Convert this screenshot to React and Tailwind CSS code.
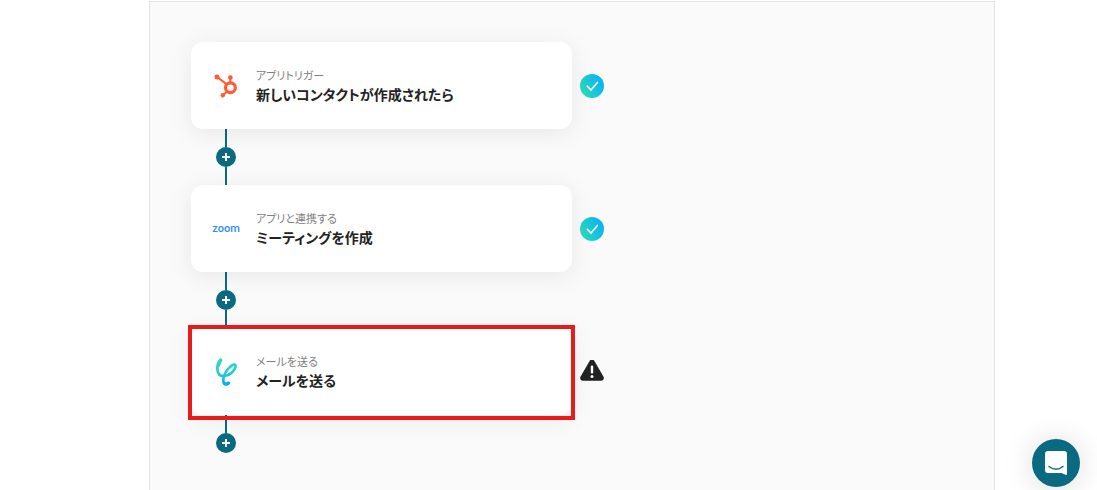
import React from "react";

const steps = [
  {
    id: "trigger",
    label: "アプリトリガー",
    title: "新しいコンタクトが作成されたら",
    logo: HubSpotLogo,
    status: "done",
  },
  {
    id: "zoom",
    label: "アプリと連携する",
    title: "ミーティングを作成",
    logo: ZoomLogo,
    status: "done",
  },
  {
    id: "mail",
    label: "メールを送る",
    title: "メールを送る",
    logo: MailLogo,
    status: "warning",
    selected: true,
  },
];

function HubSpotLogo() {
  return (
    <svg viewBox="0 0 24 24" className="size-6" fill="none" stroke="#ff5c35">
      <circle cx="16.4" cy="13.7" r="4.9" strokeWidth="3.2" />
      <path d="M3.2 3 L12.8 10.4" strokeWidth="2" />
      <path d="M16.4 3.6 V8.8" strokeWidth="2" />
      <path d="M12.8 17.6 L9.2 21.2" strokeWidth="2" />
      <g fill="#ff5c35" stroke="none">
        <circle cx="3" cy="3" r="2.5" />
        <circle cx="16.4" cy="3.6" r="2.3" />
        <circle cx="8.8" cy="21.3" r="2.2" />
      </g>
    </svg>
  );
}

function ZoomLogo() {
  return (
    <span className="[font-family:Roboto,sans-serif] text-[11px] leading-3 font-medium text-[#2d8cff]">
      zoom
    </span>
  );
}

function MailLogo() {
  return (
    <svg viewBox="0 0 24 30" className="h-[30px] w-6" fill="none">
      <defs>
        <linearGradient id="mail-logo" gradientUnits="userSpaceOnUse" x1="8" y1="2" x2="13" y2="28">
          <stop offset="0" stopColor="#2fdcb8" />
          <stop offset="0.6" stopColor="#1fcbd8" />
          <stop offset="1" stopColor="#06a8ff" />
        </linearGradient>
      </defs>
      <g stroke="url(#mail-logo)" strokeLinecap="round" strokeLinejoin="round">
        <path d="M6.6 3 C4 6 3.2 9.6 3.4 12.6 C3.8 17 6.6 19.2 10 19.2 C15.6 19 21 13.6 21.6 9.4 C21.8 7.4 19.4 7 17.4 8.8 C13.6 12 10 17.6 9.4 21.6 C9 24.4 9.2 25.8 10.6 26.6" strokeWidth="2.7" />
        <path d="M6.6 3.2 C5.4 4.8 4.8 6.4 4.4 8" strokeWidth="3.6" />
        <path d="M10.6 26.6 C11.8 27.4 13.4 27 14.4 26" strokeWidth="3.4" />
      </g>
    </svg>
  );
}

function DoneIcon() {
  return (
    <svg viewBox="0 0 24 24" className="size-6" fill="none" role="img" aria-label="完了">
      <defs>
        <linearGradient id="done" x1="0" y1="0.75" x2="1" y2="0.25">
          <stop offset="0" stopColor="#2fdcb8" />
          <stop offset="1" stopColor="#06b0f8" />
        </linearGradient>
      </defs>
      <circle cx="12" cy="12" r="12" fill="url(#done)" />
      <path d="M7.3 12.2 L11 16 L17.4 8.4" stroke="#fff" strokeWidth="1.6" strokeLinecap="round" />
    </svg>
  );
}

function WarningIcon() {
  return (
    <svg viewBox="0 0 24 24" className="size-6" role="img" aria-label="警告">
      <path
        d="M9.6 0.9 C10.7 -0.7 13.3 -0.7 14.4 0.9 L23.4 16.4 C24.6 18.5 23.3 20.8 21 20.8 H3 C0.7 20.8 -0.6 18.5 0.6 16.4 Z"
        fill="#222"
      />
      <path d="M12 6.6 V12.2" stroke="#fff" strokeWidth="2.4" strokeLinecap="round" />
      <circle cx="12" cy="16.4" r="1.5" fill="#fff" />
    </svg>
  );
}

function StepCard({ step }) {
  const Logo = step.logo;
  return (
    <div className="flex items-center gap-2">
      <div className="relative w-[381px] max-w-full">
        <button
          type="button"
          className="flex h-[87px] w-full items-center rounded-xl bg-white pl-5 text-left shadow-[0_4px_24px_rgba(0,0,0,0.08)]"
        >
          <span className="flex w-[30px] shrink-0 items-center justify-center">
            <Logo />
          </span>
          <span className="flex flex-col pl-[15px]">
            <span className="text-[11px] leading-4 text-[#808080]">{step.label}</span>
            <span className="text-[14px] leading-[22px] font-bold text-[#222]">{step.title}</span>
          </span>
        </button>
        {step.selected && (
          <span className="pointer-events-none absolute -inset-x-[3px] -top-[3px] -bottom-[5px] border-4 border-[#e81b1b]" />
        )}
      </div>
      {step.status === "done" ? <DoneIcon /> : <WarningIcon />}
    </div>
  );
}

function Connector({ last }) {
  return (
    <div className="flex w-[70px] flex-col items-center">
      <span className="h-[18px] w-0.5 bg-[#0a6a82]" />
      <button
        type="button"
        aria-label="ステップを追加"
        className="flex size-5 items-center justify-center rounded-full bg-[#0a6a82]"
      >
        <svg viewBox="0 0 8 8" className="size-2" stroke="#fff" strokeWidth="2">
          <path d="M4 0 V8 M0 4 H8" />
        </svg>
      </button>
      {!last && <span className="h-[18px] w-0.5 bg-[#0a6a82]" />}
    </div>
  );
}

function App() {
  return (
    <div className="flex h-screen overflow-hidden bg-white pt-px pr-[102px] pl-[149px] font-['Noto_Sans_CJK_JP',sans-serif] [font-feature-settings:'palt']">
      {/* Flow canvas */}
      <main className="flex-1 border-x border-t border-[#e3e3e3] bg-[#fafafa] px-[41px] pt-10">
        {steps.map((step, i) => (
          <React.Fragment key={step.id}>
            <StepCard step={step} />
            <Connector last={i === steps.length - 1} />
          </React.Fragment>
        ))}
      </main>

      {/* Chat launcher */}
      <button
        type="button"
        aria-label="チャットを開く"
        className="fixed right-[17px] bottom-[3px] flex size-12 items-center justify-center rounded-full bg-[#0a6a82] shadow-[0_2px_32px_rgba(0,0,0,0.14)]"
      >
        <svg viewBox="0 0 22 24" className="h-6 w-[22px]" fill="none">
          <path d="M3 0 H19 Q22 0 22 3 V24 Q19 23.6 16.5 22 H3 Q0 22 0 19 V3 Q0 0 3 0 Z" fill="#fff" />
          <path d="M4 15.5 Q11 21 18 15.5" stroke="#0a6a82" strokeWidth="1.5" strokeLinecap="round" />
        </svg>
      </button>
    </div>
  );
}

export default App;
